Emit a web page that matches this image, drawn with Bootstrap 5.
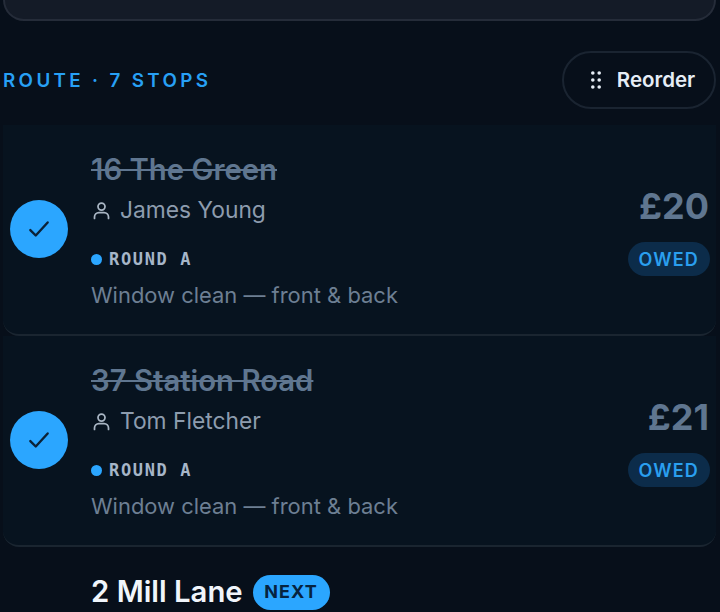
<!DOCTYPE html>
<html>
<head>
    <title>Route</title>
    <link href="https://cdn.jsdelivr.net/npm/bootstrap@5.3.0/dist/css/bootstrap.min.css" rel="stylesheet">
    <style>
        html, body { height: 612px; overflow: hidden; }
        body { background: #070f1a; font-family: "Inter", "Liberation Sans", sans-serif; }
        .page-wrap { padding: 0 4px 0 3px; }
        .top-panel {
            height: 21px;
            background: #141b27;
            border: 2px solid #252c39;
            border-top: 0;
            border-radius: 0 0 24px 24px;
        }
        .route-head { height: 104px; padding-top: 30px; }
        .route-title { color: #27a0f5; font-size: 18.8px; font-weight: 600; letter-spacing: 3.35px; line-height: 24px; margin-top: 18px; }
        .reorder-btn {
            width: 154px;
            height: 58px;
            border: 2px solid #1a2431;
            border-radius: 29px;
            color: #e6edf6;
            font-size: 20.5px;
            font-weight: 600;
            background: transparent;
            padding: 0 0 0 8px;
        }
        .stop-item {
            height: 211px;
            background: #07131f;
            border-bottom: 2px solid #1a2530;
            border-radius: 0 0 16px 16px;
            padding: 27px 6px 0 7px;
        }
        .stop-check {
            width: 58px;
            height: 58px;
            flex: none;
            background: #2ba6ff;
            border-radius: 50%;
            margin-top: 48px;
            margin-right: 23px;
        }
        .stop-name { color: #5f7690; font-size: 29.3px; font-weight: 600; line-height: 36px; text-decoration: line-through; }
        .stop-person { color: #8d9cae; font-size: 22.8px; line-height: 32px; margin-top: 6px; }
        .stop-round {
            color: #a6b6c8;
            font-family: "DejaVu Sans Mono", monospace;
            font-size: 17px;
            font-weight: 700;
            letter-spacing: 1.65px;
            line-height: 24px;
            margin-top: 21px;
        }
        .round-dot { width: 11px; height: 11px; border-radius: 50%; background: #2ba6ff; margin-right: 7px; }
        .stop-job { color: #6d7f93; font-size: 21.95px; line-height: 30px; margin-top: 9px; }
        .stop-price { color: #5f7690; font-size: 36px; font-weight: 700; line-height: 46px; margin-top: 31px; margin-right: 1px; }
        .owed-pill {
            height: 34px;
            padding: 0 11px 0 10px;
            border-radius: 17px;
            background: #0c2c4a;
            color: #2a9fef;
            font-size: 18px;
            font-weight: 600;
            letter-spacing: 1.2px;
            margin-top: 13px;
        }
        .next-name { color: #f0f5fb; font-size: 29.3px; font-weight: 600; line-height: 36px; }
        .next-pill {
            height: 35px;
            padding: 0 12px 2px 11.5px;
            border-radius: 18px;
            background: #2ba6ff;
            color: #06233f;
            font-size: 18px;
            font-weight: 700;
            letter-spacing: 1.1px;
            margin-left: 10px;
        }
        .next-row { padding: 27px 0 0 88px; }
    </style>
</head>
<body>
    <div class="page-wrap">
        <div class="top-panel"></div>
        <div class="route-head d-flex justify-content-between align-items-start">
            <div class="route-title">ROUTE · 7 STOPS</div>
            <button class="reorder-btn d-flex align-items-center justify-content-center gap-3">
                <svg width="10" height="18" viewBox="0 0 10 18" fill="#e6edf6"><circle cx="1.8" cy="2" r="1.8"/><circle cx="8.2" cy="2" r="1.8"/><circle cx="1.8" cy="9" r="1.8"/><circle cx="8.2" cy="9" r="1.8"/><circle cx="1.8" cy="16" r="1.8"/><circle cx="8.2" cy="16" r="1.8"/></svg>
                <span>Reorder</span>
            </button>
        </div>

        <div class="stop-item d-flex">
            <div class="stop-check d-flex align-items-center justify-content-center">
                <svg width="26" height="26" viewBox="0 0 24 24" fill="none" stroke="#0b2238" stroke-width="2.2" stroke-linecap="round" stroke-linejoin="round"><path d="M4 13l5 5L20 6"/></svg>
            </div>
            <div class="flex-grow-1">
                <div class="stop-name">16 The Green</div>
                <div class="stop-person d-flex align-items-center gap-2">
                    <svg width="21" height="21" viewBox="0 0 24 24" fill="none" stroke="#a9b6c4" stroke-width="2" stroke-linecap="round"><circle cx="12" cy="7.5" r="4"/><path d="M4 21v-1.5a5 5 0 0 1 5-5h6a5 5 0 0 1 5 5V21"/></svg>
                    <span>James Young</span>
                </div>
                <div class="stop-round d-flex align-items-center"><span class="round-dot"></span>ROUND A</div>
                <div class="stop-job">Window clean — front &amp; back</div>
            </div>
            <div class="d-flex flex-column align-items-end">
                <div class="stop-price">£20</div>
                <div class="owed-pill d-flex align-items-center">OWED</div>
            </div>
        </div>

        <div class="stop-item d-flex">
            <div class="stop-check d-flex align-items-center justify-content-center">
                <svg width="26" height="26" viewBox="0 0 24 24" fill="none" stroke="#0b2238" stroke-width="2.2" stroke-linecap="round" stroke-linejoin="round"><path d="M4 13l5 5L20 6"/></svg>
            </div>
            <div class="flex-grow-1">
                <div class="stop-name">37 Station Road</div>
                <div class="stop-person d-flex align-items-center gap-2">
                    <svg width="21" height="21" viewBox="0 0 24 24" fill="none" stroke="#a9b6c4" stroke-width="2" stroke-linecap="round"><circle cx="12" cy="7.5" r="4"/><path d="M4 21v-1.5a5 5 0 0 1 5-5h6a5 5 0 0 1 5 5V21"/></svg>
                    <span>Tom Fletcher</span>
                </div>
                <div class="stop-round d-flex align-items-center"><span class="round-dot"></span>ROUND A</div>
                <div class="stop-job">Window clean — front &amp; back</div>
            </div>
            <div class="d-flex flex-column align-items-end">
                <div class="stop-price">£21</div>
                <div class="owed-pill d-flex align-items-center">OWED</div>
            </div>
        </div>

        <div class="next-row d-flex align-items-center">
            <span class="next-name">2 Mill Lane</span>
            <span class="next-pill d-flex align-items-center">NEXT</span>
        </div>
    </div>
    <script src="https://cdn.jsdelivr.net/npm/bootstrap@5.3.0/dist/js/bootstrap.bundle.min.js"></script>
</body>
</html>
